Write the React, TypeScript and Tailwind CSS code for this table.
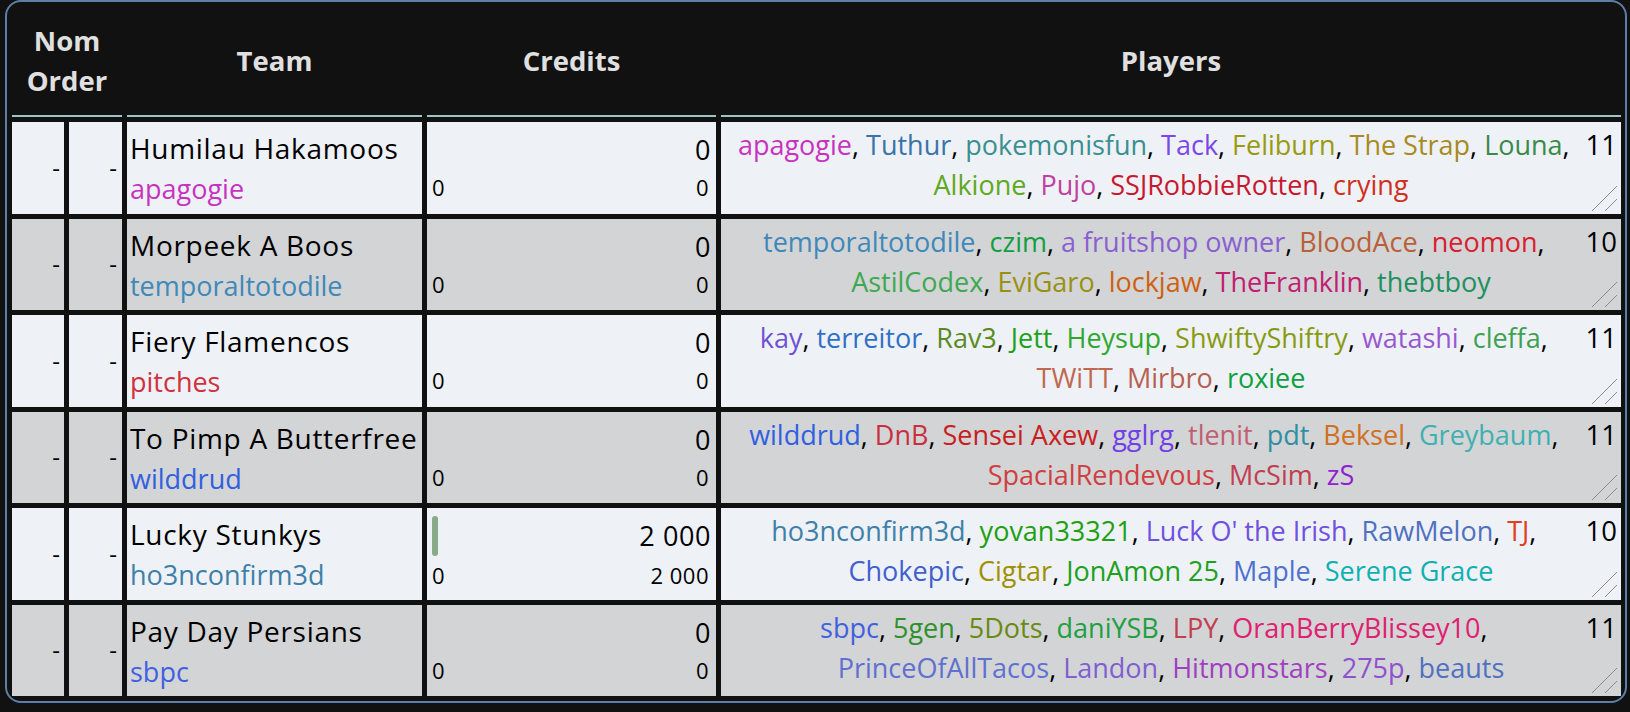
import React from 'react';

type Player = [string, string];

type Team = {
    name: string;
    manager: string;
    managerColor: string;
    credits: string;
    spent: string;
    left: string;
    bar?: boolean;
    count: number;
    players: Player[];
};

const teams: Team[] = [
    {
        name: 'Humilau Hakamoos',
        manager: 'apagogie',
        managerColor: '#c832c0',
        credits: '0',
        spent: '0',
        left: '0',
        count: 11,
        players: [
            ['apagogie', '#c832c0'],
            ['Tuthur', '#3a73a8'],
            ['pokemonisfun', '#3a9090'],
            ['Tack', '#7a48e8'],
            ['Feliburn', '#9a9a10'],
            ['The Strap', '#a88a20'],
            ['Louna', '#3a8a4a'],
            ['Alkione', '#60a820'],
            ['Pujo', '#c040a0'],
            ['SSJRobbieRotten', '#c81830'],
            ['crying', '#d03020'],
        ],
    },
    {
        name: 'Morpeek A Boos',
        manager: 'temporaltotodile',
        managerColor: '#4088b8',
        credits: '0',
        spent: '0',
        left: '0',
        count: 10,
        players: [
            ['temporaltotodile', '#4088b8'],
            ['czim', '#10a040'],
            ['a fruitshop owner', '#8a60d0'],
            ['BloodAce', '#b86038'],
            ['neomon', '#d82030'],
            ['AstilCodex', '#40a850'],
            ['EviGaro', '#989010'],
            ['lockjaw', '#d06010'],
            ['TheFranklin', '#c02070'],
            ['thebtboy', '#209060'],
        ],
    },
    {
        name: 'Fiery Flamencos',
        manager: 'pitches',
        managerColor: '#d03040',
        credits: '0',
        spent: '0',
        left: '0',
        count: 11,
        players: [
            ['kay', '#7050d8'],
            ['terreitor', '#3070c8'],
            ['Rav3', '#5a8a20'],
            ['Jett', '#20a020'],
            ['Heysup', '#30a830'],
            ['ShwiftyShiftry', '#8a9a10'],
            ['watashi', '#9858d0'],
            ['cleffa', '#40a050'],
            ['TWiTT', '#c06850'],
            ['Mirbro', '#b86050'],
            ['roxiee', '#10a040'],
        ],
    },
    {
        name: 'To Pimp A Butterfree',
        manager: 'wilddrud',
        managerColor: '#3060e0',
        credits: '0',
        spent: '0',
        left: '0',
        count: 11,
        players: [
            ['wilddrud', '#3060e0'],
            ['DnB', '#c83040'],
            ['Sensei Axew', '#c82020'],
            ['gglrg', '#7040e8'],
            ['tlenit', '#c06070'],
            ['pdt', '#3090a0'],
            ['Beksel', '#d07020'],
            ['Greybaum', '#40b0b0'],
            ['SpacialRendevous', '#d04040'],
            ['McSim', '#c04050'],
            ['zS', '#9020d0'],
        ],
    },
    {
        name: 'Lucky Stunkys',
        manager: 'ho3nconfirm3d',
        managerColor: '#4080a8',
        credits: '2 000',
        spent: '0',
        left: '2 000',
        bar: true,
        count: 10,
        players: [
            ['ho3nconfirm3d', '#4080a8'],
            ['yovan33321', '#20a010'],
            ["Luck O' the Irish", '#7050e0'],
            ['RawMelon', '#5070c0'],
            ['TJ', '#e04020'],
            ['Chokepic', '#4060d0'],
            ['Cigtar', '#a09000'],
            ['JonAmon 25', '#20a020'],
            ['Maple', '#5070d0'],
            ['Serene Grace', '#10b0b0'],
        ],
    },
    {
        name: 'Pay Day Persians',
        manager: 'sbpc',
        managerColor: '#4060e0',
        credits: '0',
        spent: '0',
        left: '0',
        count: 11,
        players: [
            ['sbpc', '#4060e0'],
            ['5gen', '#30902a'],
            ['5Dots', '#6a8a10'],
            ['daniYSB', '#20a040'],
            ['LPY', '#c04050'],
            ['OranBerryBlissey10', '#e02070'],
            ['PrinceOfAllTacos', '#6070d0'],
            ['Landon', '#8060d0'],
            ['Hitmonstars', '#a040c0'],
            ['275p', '#9050d0'],
            ['beauts', '#5070c0'],
        ],
    },
];

function Grip() {
    return (
        <svg className="absolute bottom-[2px] right-[3px] h-[28px] w-[28px]" viewBox="0 0 28 28">
            <line x1="2" y1="27" x2="27" y2="2" stroke="#8c8c8c" strokeWidth="1" />
            <line x1="15" y1="27" x2="27" y2="15" stroke="#8c8c8c" strokeWidth="1" />
        </svg>
    );
}

export default function App() {
    return (
        <div className="min-h-screen bg-[#111111] font-['Open_Sans',sans-serif] text-black">
            <div className="ml-[5px] w-[1622px] rounded-[16px] border-2 border-[#5b80a8] p-[5px]">
                <div className="grid grid-cols-[52px_53px_295px_289px_900px] grid-rows-[110px_repeat(6,91.5px)] gap-[5px]">
                    {/* header */}
                    <div className="col-span-2 flex items-center justify-center border-b-2 border-[#9cc4c4] text-center text-[27.5px] font-bold leading-[40px] text-[#e0e0e0]">
                        Nom<br />Order
                    </div>
                    <div className="flex items-center justify-center border-b-2 border-[#9cc4c4] text-[27.5px] font-bold text-[#e0e0e0]">Team</div>
                    <div className="flex items-center justify-center border-b-2 border-[#9cc4c4] text-[27.5px] font-bold text-[#e0e0e0]">Credits</div>
                    <div className="flex items-center justify-center border-b-2 border-[#9cc4c4] text-[27.5px] font-bold text-[#e0e0e0]">Players</div>

                    {teams.map((t, i) => {
                        const bg = i % 2 === 0 ? 'bg-[#eef2f6]' : 'bg-[#d3d4d6]';
                        return (
                            <React.Fragment key={t.name}>
                                <div className={`${bg} flex items-center justify-end pr-[4px] text-[24px]`}>-</div>
                                <div className={`${bg} flex items-center justify-end pr-[5px] text-[24px]`}>-</div>
                                <div className={`${bg} px-[3px] pt-[7px] whitespace-nowrap`}>
                                    <div className="text-[28px] leading-[38px] tracking-[0.7px]">{t.name}</div>
                                    <div className="mt-[3px] text-[27px] leading-[37px]" style={{ color: t.managerColor }}>
                                        {t.manager}
                                    </div>
                                </div>
                                <div className={`${bg} px-[5px] pt-[10px]`}>
                                    <div className="flex items-start justify-between">
                                        {t.bar ? (
                                            <div className="-mt-[2px] h-[40px] w-[6px] rounded-full bg-[#88aa88]" />
                                        ) : (
                                            <div />
                                        )}
                                        <div className="text-[27px] leading-[36px] tracking-[0.6px]">{t.credits}</div>
                                    </div>
                                    <div className="mt-[5px] flex justify-between text-[22px] leading-[28px] tracking-[0.5px]">
                                        <span>{t.spent}</span>
                                        <span className="pr-[2px]">{t.left}</span>
                                    </div>
                                </div>
                                <div className={`${bg} relative px-[4px] pt-[3px] text-center text-[27px] leading-[40px]`}>
                                    <span className="float-right pl-[3px] text-[27.5px]">{t.count}</span>
                                    {t.players.map(([n, c], j) => (
                                        <React.Fragment key={n}>
                                            <span style={{ color: c }}>{n}</span>
                                            {j < t.players.length - 1 ? ', ' : ''}
                                        </React.Fragment>
                                    ))}
                                    <Grip />
                                </div>
                            </React.Fragment>
                        );
                    })}
                </div>
            </div>
        </div>
    );
}
